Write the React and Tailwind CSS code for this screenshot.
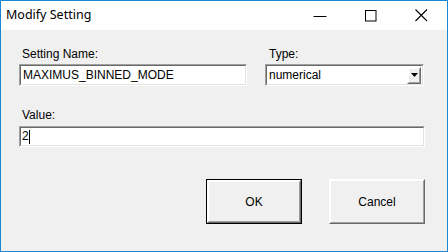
import React from "react";

function Sunken({ className = "", innerClassName = "", children }) {
  return (
    <div className={"border border-t-[#a0a0a0] border-l-[#a0a0a0] border-b-white border-r-white " + className}>
      <div className={"h-full border border-t-[#696969] border-l-[#696969] border-b-[#e3e3e3] border-r-[#e3e3e3] bg-white " + innerClassName}>
        {children}
      </div>
    </div>
  );
}

function Raised({ className = "", innerClassName = "", children }) {
  return (
    <div className={"border border-t-white border-l-white border-b-[#696969] border-r-[#696969] " + className}>
      <div className={"h-full border border-t-[#ffffff] border-l-[#ffffff] border-b-[#a0a0a0] border-r-[#a0a0a0] bg-[#f0f0f0] " + innerClassName}>
        {children}
      </div>
    </div>
  );
}

export default function App() {
  return (
    <div
      className="w-[448px] h-[252px] border border-[#1a87d6] bg-[#f0f0f0] flex flex-col text-black"
      style={{ fontFamily: '"Liberation Sans", Arial, sans-serif' }}
    >
      {/* Title bar */}
      <div className="h-[29px] bg-white flex items-center shrink-0">
        <div
          className="pl-[5px] text-[12.5px] leading-none pb-[1px]"
          style={{ fontFamily: '"Noto Sans", "Open Sans", sans-serif' }}
        >
          Modify Setting
        </div>
        <div className="flex-1" />
        <div className="w-[51px] h-full flex items-center justify-center">
          <svg width="14" height="14" viewBox="0 0 14 14">
            <path d="M0.5 7.5H13.5" stroke="#000" strokeWidth="1" />
          </svg>
        </div>
        <div className="w-[51px] h-full flex items-center justify-center">
          <svg width="12" height="12" viewBox="0 0 12 12">
            <rect x="0.5" y="0.5" width="10.5" height="10.5" fill="none" stroke="#000" strokeWidth="1" />
          </svg>
        </div>
        <div className="w-[51px] h-full flex items-center justify-center pr-[1px]">
          <svg width="13" height="13" viewBox="0 0 13 13">
            <path d="M0.5 0.5L12 12M12 0.5L0.5 12" stroke="#000" strokeWidth="1.1" />
          </svg>
        </div>
      </div>

      {/* Body */}
      <div className="flex-1 flex flex-col pl-[18px] pr-[22px] pt-[17px] text-[12px]">
        <div className="flex gap-[18px]">
          <div className="w-[228px] flex flex-col">
            <div className="ml-[3px] leading-[14px] h-[14px]">Setting Name:</div>
            <Sunken className="mt-[3px] h-[22px]" innerClassName="pl-[2px] leading-[18px]">
              MAXIMUS_BINNED_MODE
            </Sunken>
          </div>
          <div className="w-[159px] flex flex-col">
            <div className="ml-[4px] leading-[14px] h-[14px]">Type:</div>
            <Sunken className="mt-[3px] h-[22px]" innerClassName="flex items-center pl-[2px] pr-[1px]">
              <div className="flex-1 leading-[18px]">numerical</div>
              <Raised className="w-[14px] h-[17px]" innerClassName="flex items-center justify-center">
                <svg width="7" height="4" viewBox="0 0 7 4">
                  <path d="M0 0H7L3.5 4Z" fill="#000" />
                </svg>
              </Raised>
            </Sunken>
          </div>
        </div>

        <div className="mt-[22px] ml-[3px] leading-[14px] h-[14px]">Value:</div>
        <Sunken className="mt-[4px] h-[21px] w-[406px]" innerClassName="flex items-center pl-[1px]">
          <span className="leading-[17px]">2</span>
          <span className="w-[1px] h-[14px] bg-black ml-[0px]" />
        </Sunken>

        <div className="mt-[32px] flex pl-[187px] gap-[27px]">
          <div className="border border-black w-[97px] h-[45px]">
            <Raised className="h-full border-t-white border-l-white" innerClassName="flex items-center justify-center">
              OK
            </Raised>
          </div>
          <Raised className="w-[97px] h-[45px]" innerClassName="flex items-center justify-center">
            Cancel
          </Raised>
        </div>
      </div>
    </div>
  );
}
